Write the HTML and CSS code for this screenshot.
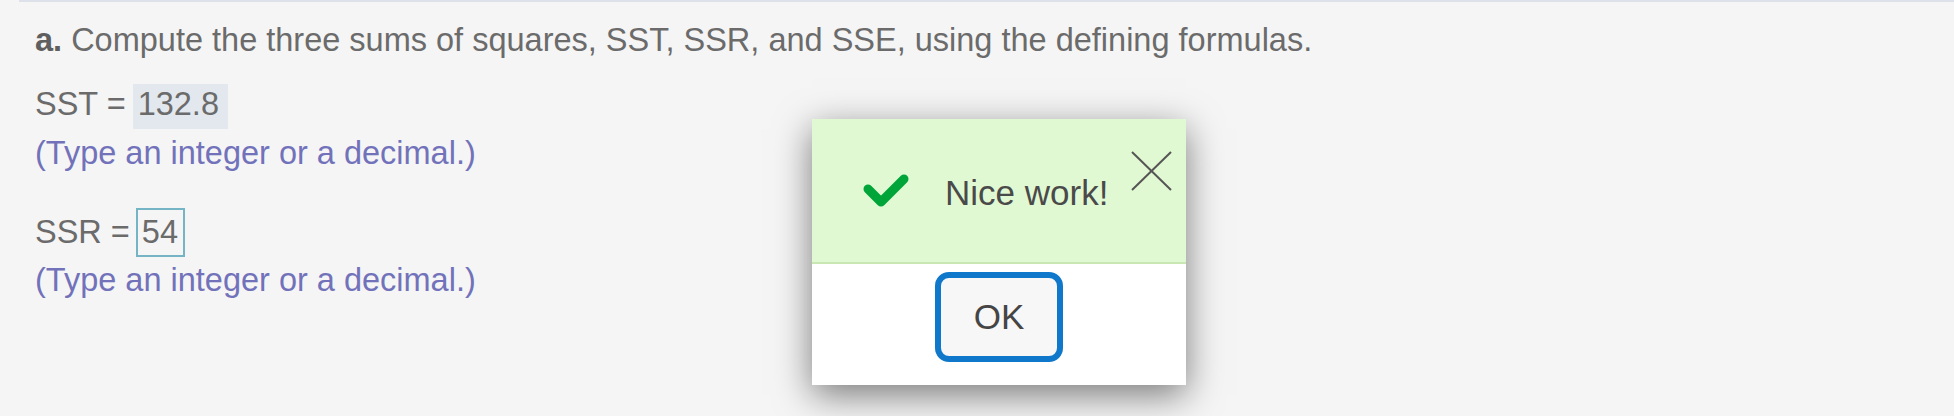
FILE: index.html
```html
<!DOCTYPE html>
<html>
<head>
<meta charset="utf-8">
<link rel="stylesheet" href="styles.css">
</head>
<body>
<div class="page">
  <p class="question"><b class="part">a.</b> Compute the three sums of squares, SST, SSR, and SSE, using the defining formulas.</p>
  <div class="row sst">
    <span class="label">SST =</span>
    <span class="answer filled">132.8</span>
  </div>
  <p class="hint hint-1">(Type an integer or a decimal.)</p>
  <div class="row ssr">
    <span class="label">SSR =</span>
    <span class="answer boxed">54</span>
  </div>
  <p class="hint hint-2">(Type an integer or a decimal.)</p>
</div>

<div class="dialog">
  <div class="dialog-top">
    <svg class="check" width="46" height="36" viewBox="0 0 46 36">
      <polyline points="5,16 18,29 41,6" fill="none" stroke="#00a53a" stroke-width="9" stroke-linecap="round" stroke-linejoin="round"/>
    </svg>
    <span class="msg">Nice work!</span>
    <svg class="close" width="41" height="40" viewBox="0 0 41 40">
      <line x1="1" y1="1" x2="40" y2="39" stroke="#555" stroke-width="2"/>
      <line x1="40" y1="1" x2="1" y2="39" stroke="#555" stroke-width="2"/>
    </svg>
  </div>
  <div class="dialog-bottom">
    <button class="ok">OK</button>
  </div>
</div>
</body>
</html>
```
FILE: styles.css
```css
html, body {
  margin: 0;
  padding: 0;
  background: #f5f5f5;
  height: 100%;
  overflow: hidden;
}
body {
  font-family: "Liberation Sans", Arial, Helvetica, sans-serif;
  font-size: 32.5px;
  color: #6b6b6b;
}
.page {
  margin-left: 19px;
  border-top: 2px solid #dde2ea;
  padding-left: 16px;
}
p {
  margin: 0;
  line-height: 40px;
}
.question {
  margin-top: 18px;
}
.part {
  color: #5f5f5f;
}
.row {
  display: flex;
  align-items: baseline;
  line-height: 40px;
}
.sst {
  margin-top: 24px;
}
.ssr {
  margin-top: 35px;
}
.hint {
  color: #7272bb;
}
.hint-1 {
  margin-top: 4px;
}
.hint-2 {
  margin-top: 3px;
}
.answer {
  margin-left: 7px;
  color: #6b6b6b;
}
.filled {
  background: #e3e8ef;
  padding: 0 9px 5px 5px;
}
.boxed {
  margin-left: 6px;
  border: 2px solid #74b4c4;
  padding: 2px 5px 3px 4px;
}
.dialog {
  position: absolute;
  left: 812px;
  top: 119px;
  width: 374px;
  background: #ffffff;
  box-shadow: 0 10px 34px rgba(0, 0, 0, 0.5);
}
.dialog-top {
  position: relative;
  height: 143px;
  background: #e1f9d2;
  border-bottom: 2px solid #c8e7b3;
  display: flex;
  align-items: center;
  padding-left: 51px;
}
.check {
  display: block;
}
.msg {
  margin-left: 36px;
  font-size: 35px;
  line-height: 40px;
  color: #4a4a4a;
  margin-top: 5px;
}
.close {
  position: absolute;
  top: 32px;
  right: 14px;
}
.dialog-bottom {
  height: 121px;
  display: flex;
  justify-content: center;
  align-items: flex-start;
}
.ok {
  margin-top: 8px;
  width: 128px;
  height: 90px;
  box-sizing: border-box;
  border: 6px solid #0f78ca;
  border-radius: 14px;
  background: #f7f7f7;
  font-family: "Liberation Sans", Arial, Helvetica, sans-serif;
  font-size: 35px;
  color: #454545;
  padding: 0;
}
```
